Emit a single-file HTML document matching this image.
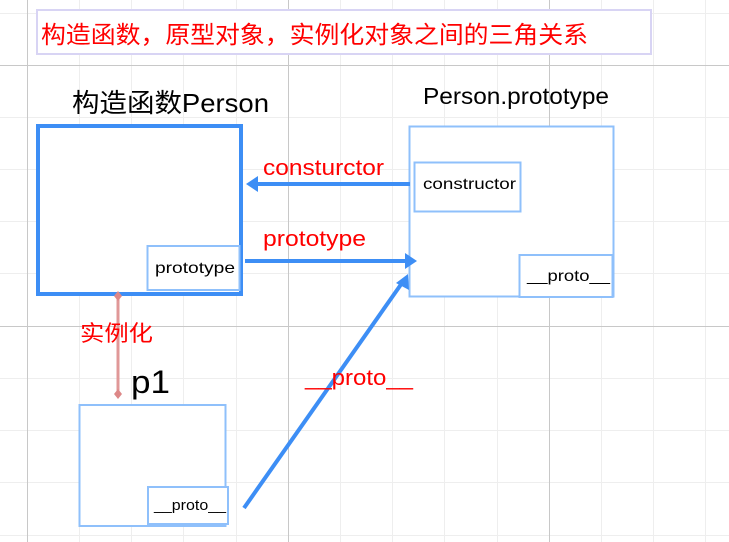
<!DOCTYPE html>
<html><head><meta charset="utf-8"><style>
body{margin:0;width:729px;height:542px;overflow:hidden;background:#fff}
svg{display:block}
text{font-family:"Liberation Sans","Noto Sans CJK SC",sans-serif}
</style></head><body>
<svg width="729" height="542" viewBox="0 0 729 542" xmlns="http://www.w3.org/2000/svg">
<g stroke="#eeeeee" stroke-width="1">
<line x1="79.5" y1="0" x2="79.5" y2="542"/><line x1="131.5" y1="0" x2="131.5" y2="542"/><line x1="183.5" y1="0" x2="183.5" y2="542"/><line x1="236.5" y1="0" x2="236.5" y2="542"/>
<line x1="340.5" y1="0" x2="340.5" y2="542"/><line x1="392.5" y1="0" x2="392.5" y2="542"/><line x1="444.5" y1="0" x2="444.5" y2="542"/><line x1="497.5" y1="0" x2="497.5" y2="542"/>
<line x1="601.5" y1="0" x2="601.5" y2="542"/><line x1="653.5" y1="0" x2="653.5" y2="542"/><line x1="705.5" y1="0" x2="705.5" y2="542"/>
<line x1="0" y1="13.5" x2="729" y2="13.5"/><line x1="0" y1="117.5" x2="729" y2="117.5"/><line x1="0" y1="169.5" x2="729" y2="169.5"/><line x1="0" y1="221.5" x2="729" y2="221.5"/><line x1="0" y1="273.5" x2="729" y2="273.5"/>
<line x1="0" y1="378.5" x2="729" y2="378.5"/><line x1="0" y1="430.5" x2="729" y2="430.5"/><line x1="0" y1="482.5" x2="729" y2="482.5"/><line x1="0" y1="535.5" x2="729" y2="535.5"/>
</g>
<g stroke="#c8c8c8" stroke-width="1">
<line x1="27.5" y1="0" x2="27.5" y2="542"/><line x1="288.5" y1="0" x2="288.5" y2="542"/><line x1="549.5" y1="0" x2="549.5" y2="542"/>
<line x1="0" y1="65.5" x2="729" y2="65.5"/><line x1="0" y1="326.5" x2="729" y2="326.5"/>
</g>
<rect x="37" y="10" width="614" height="44" fill="#fff" stroke="#d8d4f4" stroke-width="2"/>
<text x="41" y="43" font-size="24" fill="#ff0000" textLength="547" lengthAdjust="spacingAndGlyphs">构造函数，原型对象，实例化对象之间的三角关系</text>
<text x="72" y="112" font-size="26" fill="#000" textLength="197" lengthAdjust="spacingAndGlyphs">构造函数Person</text>
<text x="423" y="104" font-size="23" fill="#000" textLength="186" lengthAdjust="spacingAndGlyphs">Person.prototype</text>
<rect x="38" y="126" width="203" height="168" fill="#fff" stroke="#3d8ef5" stroke-width="4"/>
<rect x="147.5" y="246" width="92" height="44" fill="#fff" stroke="#8fc0fb" stroke-width="2"/>
<text x="155" y="273" font-size="16" fill="#000" textLength="80" lengthAdjust="spacingAndGlyphs">prototype</text>
<rect x="409.5" y="126.5" width="204" height="170" fill="#fff" stroke="#8fc0fb" stroke-width="2"/>
<rect x="414.5" y="162.5" width="106" height="49" fill="#fff" stroke="#8fc0fb" stroke-width="2"/>
<text x="423" y="189" font-size="16" fill="#000" textLength="93" lengthAdjust="spacingAndGlyphs">constructor</text>
<rect x="519.5" y="255" width="93" height="42" fill="#fff" stroke="#8fc0fb" stroke-width="2"/>
<text x="527" y="281" font-size="16" fill="#000" textLength="83" lengthAdjust="spacingAndGlyphs">__proto__</text>
<rect x="79.5" y="405" width="146" height="121" fill="#fff" stroke="#8fc0fb" stroke-width="2"/>
<rect x="148" y="487" width="80" height="37" fill="#fff" stroke="#8fc0fb" stroke-width="2"/>
<text x="154" y="510" font-size="15" fill="#000" textLength="72" lengthAdjust="spacingAndGlyphs">__proto__</text>
<text x="131" y="393" font-size="32" fill="#000" textLength="39" lengthAdjust="spacingAndGlyphs">p1</text>
<g stroke="#3d8ef5" stroke-width="4" fill="#3d8ef5">
<line x1="410" y1="184" x2="256" y2="184"/><polygon points="246,184 258,176 258,192" stroke="none"/>
<line x1="245" y1="261" x2="406" y2="261"/><polygon points="417,261 405,253 405,269" stroke="none"/>
<line x1="244" y1="508" x2="402" y2="283"/><polygon points="408,274 409,290 396,283" stroke="none"/>
</g>
<line x1="118" y1="296" x2="118" y2="394" stroke="#e09898" stroke-width="3"/>
<polygon points="118,291 122,296 118,301 114,296" fill="#d88"/>
<polygon points="118,389 122,394 118,399 114,394" fill="#d88"/>
<text x="263" y="175" font-size="22" fill="#ff0000" textLength="121" lengthAdjust="spacingAndGlyphs">consturctor</text>
<text x="263" y="246" font-size="22" fill="#ff0000" textLength="103" lengthAdjust="spacingAndGlyphs">prototype</text>
<text x="80" y="341" font-size="22" fill="#ff0000" textLength="73" lengthAdjust="spacingAndGlyphs">实例化</text>
<text x="305" y="385" font-size="22" fill="#ff0000" textLength="108" lengthAdjust="spacingAndGlyphs">__proto__</text>
</svg>
</body></html>
